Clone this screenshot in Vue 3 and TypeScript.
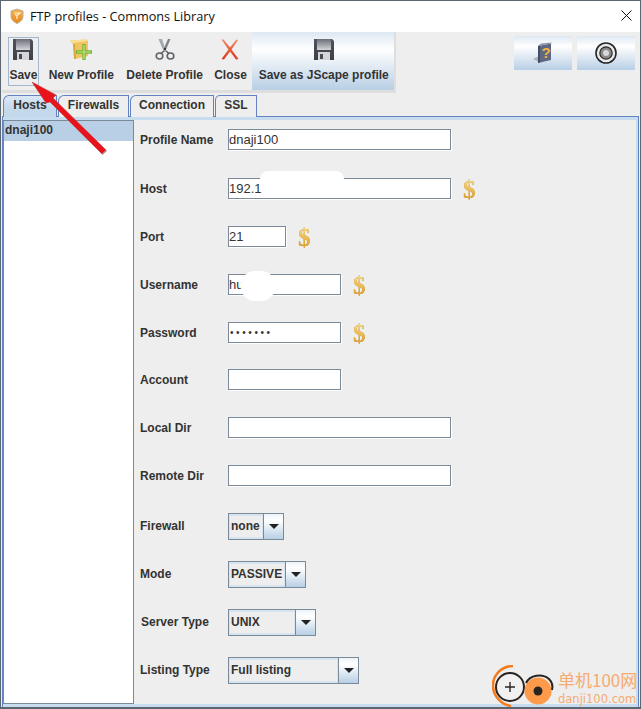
<script setup lang="ts">
interface Field { label: string; kind: 'input' | 'combo'; value?: string; width: number; dollar?: boolean; blot?: 'host' | 'user'; password?: boolean; shift?: boolean; size?: 'tall' | 'short' }
const fields: Field[] = [
  { label: 'Profile Name', kind: 'input', value: 'dnaji100', width: 223, size: 'tall' },
  { label: 'Host', kind: 'input', value: '192.1', width: 223, dollar: true, blot: 'host' },
  { label: 'Port', kind: 'input', value: '21', width: 58, dollar: true },
  { label: 'Username', kind: 'input', value: 'hu', width: 113, dollar: true, blot: 'user' },
  { label: 'Password', kind: 'input', value: '•••••••', width: 113, dollar: true, password: true, size: 'short' },
  { label: 'Account', kind: 'input', value: '', width: 113 },
  { label: 'Local Dir', kind: 'input', value: '', width: 223 },
  { label: 'Remote Dir', kind: 'input', value: '', width: 223 },
  { label: 'Firewall', kind: 'combo', value: 'none', width: 56 },
  { label: 'Mode', kind: 'combo', value: 'PASSIVE', width: 78 },
  { label: 'Server Type', kind: 'combo', value: 'UNIX', width: 88, shift: true },
  { label: 'Listing Type', kind: 'combo', value: 'Full listing', width: 131 },
]
const tabs = ['Hosts', 'Firewalls', 'Connection', 'SSL']
</script>

<template>
  <div class="window">
    <div class="titlebar">
      <svg class="appicon" width="16" height="16" viewBox="0 0 16 16">
        <defs>
          <linearGradient id="sh" x1="0" y1="0" x2="0" y2="1"><stop offset="0" stop-color="#f7b34c"/><stop offset="1" stop-color="#e8861c"/></linearGradient>
        </defs>
        <path d="M8 1 L14 3 V8 C14 12 11 14 8 15.5 C5 14 2 12 2 8 V3 Z" fill="url(#sh)" stroke="#b9b29c" stroke-width="1"/>
        <path d="M5 5 H11 L8 7.5 V11 M8 7.5 L6 6.5" fill="none" stroke="#fff3d6" stroke-width="1.2"/>
      </svg>
      <span class="title">FTP profiles - Commons Library</span>
      <svg class="closex" width="11" height="11" viewBox="0 0 11 11"><path d="M0.5 0.5 L10.5 10.5 M10.5 0.5 L0.5 10.5" stroke="#111" stroke-width="1" fill="none"/></svg>
    </div>

    <div class="body">
      <div class="toolrow">
        <div class="toolbar">
          <div class="tool save">
            <svg width="20" height="21" viewBox="0 0 20 21"><use href="#floppy"/></svg>
            <span>Save</span>
          </div>
          <div class="tool newp">
            <svg width="24" height="21" viewBox="0 0 24 21">
              <path d="M1 1.5 L18 0.5 L19 2 V17 L6 20 L4 5 Z" fill="#eec560"/>
              <path d="M1 1.5 L18 0.5 L19 2 L4 4 Z" fill="#f8e097"/>
              <path d="M4 5 L5 20 L7 20 L6 5 Z" fill="#d8a640"/>
              <path d="M15 5 V21 M7 13 H23" stroke="#79b536" stroke-width="3.4"/>
              <path d="M15 6 V20 M8 13 H22" stroke="#bfe685" stroke-width="1.2"/>
            </svg>
            <span>New Profile</span>
          </div>
          <div class="tool del">
            <svg width="20" height="21" viewBox="0 0 20 21">
              <path d="M3.5 0 L7 0 L11 12 L9 13 Z" fill="#a4a9ad"/>
              <path d="M15.5 0 L13 0 L8.5 10 L10 13 Z" fill="#7e8488"/>
              <circle cx="10" cy="10" r="1" fill="#222"/>
              <path d="M9 12 L6 14.5 M11 12 L14 14.5" stroke="#5a5f63" stroke-width="1.6"/>
              <ellipse cx="4.5" cy="17" rx="3.3" ry="3" fill="none" stroke="#5e6367" stroke-width="1.6"/>
              <ellipse cx="15.5" cy="17" rx="3.3" ry="3" fill="none" stroke="#5e6367" stroke-width="1.6"/>
            </svg>
            <span>Delete Profile</span>
          </div>
          <div class="tool clo">
            <svg width="18" height="21" viewBox="0 0 18 21">
              <defs><linearGradient id="xr" x1="0" y1="0" x2="0" y2="1"><stop offset="0" stop-color="#f2876a"/><stop offset="0.5" stop-color="#ea5a36"/><stop offset="1" stop-color="#d93a22"/></linearGradient></defs>
              <path d="M0.5 0.5 L2.5 0.5 L9 8.5 L15.5 0.5 L17 1 L10.5 10.5 L17.5 20 L15 20.5 L9 12.5 L3 20.5 L0.5 20 L7.5 10.5 Z" fill="url(#xr)"/>
            </svg>
            <span>Close</span>
          </div>
          <div class="tool jscape">
            <svg width="20" height="21" viewBox="0 0 20 21"><use href="#floppy"/></svg>
            <span>Save as JScape profile</span>
          </div>
        </div>
        <div class="sidebtns">
          <div class="sidebtn">
            <svg width="22" height="22" viewBox="0 0 22 22">
              <path d="M1 17 L7 14 V20 Z" fill="#aeb3bb"/>
              <path d="M6 4 L19 1.5 V18 L6 21 Z" fill="#5f6883"/>
              <path d="M6 4 L9 1.5 L20 0.5 L19 1.5 Z" fill="#8b93a8"/>
              <path d="M6 4 V21 L8 20.5 V3.5 Z" fill="#454c63"/>
              <text x="9.5" y="16" class="q">?</text>
            </svg>
          </div>
          <div class="sidebtn">
            <svg width="22" height="22" viewBox="0 0 22 22">
              <circle cx="11" cy="11" r="10" fill="#ececec" stroke="#262626" stroke-width="1.6"/>
              <circle cx="11" cy="11" r="6.2" fill="#8a8a8a" stroke="#2a2a2a" stroke-width="1.2"/>
              <circle cx="11" cy="11" r="3" fill="#d8d8d8"/>
            </svg>
          </div>
        </div>
      </div>

      <div class="tabs">
        <div v-for="(t, i) in tabs" :key="t" class="tab" :class="['t' + i, { on: i === 0 }]">{{ t }}</div>
      </div>

      <div class="pane">
        <div class="list"><div class="selrow">dnaji100</div></div>
        <div class="form">
          <div v-for="f in fields" :key="f.label" class="row" :class="[f.size, { comborow: f.kind === 'combo' }]">
            <label :class="{ shift: f.shift }">{{ f.label }}</label>
            <div v-if="f.kind === 'input'" class="input" :class="{ pw: f.password }" :style="{ width: f.width + 'px' }">
              {{ f.value }}
              <div v-if="f.blot" class="blot" :class="f.blot"></div>
            </div>
            <div v-else class="combo" :style="{ width: f.width + 'px' }">
              <div class="cval">{{ f.value }}</div>
              <div class="carrow"><i></i></div>
            </div>
            <span v-if="f.dollar" class="dollar">$</span>
          </div>
        </div>
      </div>
    </div>

    <svg class="defs" width="0" height="0">
      <defs>
        <linearGradient id="fl" x1="0" y1="0" x2="0" y2="1"><stop offset="0" stop-color="#50525b"/><stop offset="1" stop-color="#3e4048"/></linearGradient>
        <linearGradient id="fp" x1="0" y1="0" x2="0" y2="1"><stop offset="0" stop-color="#6b6d77"/><stop offset="1" stop-color="#d4d5d9"/></linearGradient>
        <g id="floppy">
          <path d="M0 0 H18 L20 2 V21 H0 Z" fill="url(#fl)"/>
          <rect x="3" y="0" width="14" height="11" fill="url(#fp)"/>
          <rect x="4" y="13" width="12" height="8" fill="#d6d6d8"/>
          <rect x="6" y="15" width="3" height="5" fill="#4a4c55"/>
        </g>
      </defs>
    </svg>

    <svg class="arrow" width="80" height="76" viewBox="0 0 80 76">
      <path d="M1 0 L25 13 L22 16 L75 68 L71 72 L19 20 L15 21 Z" fill="#e8141c" stroke="#c62a2a" stroke-width="0.5"/>
      <path d="M71 72.5 L75.5 68.5" stroke="#9c8a8a" stroke-width="1.2"/>
    </svg>

    <div class="wm">
      <svg width="64" height="44" viewBox="0 0 64 44">
        <path d="M21 1 C9 1 0 11 1 22 C2 32 10 40 19 41" fill="none" stroke="#f47c20" stroke-width="2.6"/>
        <circle cx="18" cy="22" r="14" fill="#f1f1f1" stroke="#2b2522" stroke-width="2"/>
        <path d="M18 17 V27 M13 22 H23" stroke="#2b2522" stroke-width="1.4"/>
        <circle cx="46" cy="26" r="13.5" fill="#ff9a4a"/>
        <path d="M34 18 C38 10 50 8 57 14 C60 17 61 21 60 25" fill="none" stroke="#2b2522" stroke-width="2"/>
        <circle cx="46" cy="26" r="4.5" fill="#2b2522"/>
      </svg>
      <div class="wmt">
        <div class="w1">单机100网</div>
        <div class="w2">danji100.com</div>
      </div>
    </div>
  </div>
</template>

<style>
html, body { margin: 0; background: #eee; }
</style>

<style scoped>
.window {
  position: relative;
  width: 641px;
  height: 709px;
  box-sizing: border-box;
  border: 1px solid #5b6670;
  border-top-width: 1px;
  border-bottom-width: 2px;
  background: #eeeeee;
  overflow: hidden;
  display: flex;
  flex-direction: column;
  font-family: "Liberation Sans", Arial, sans-serif;
  color: #333333;
}
.defs { position: absolute; }
.titlebar {
  height: 31px;
  flex: none;
  background: #fff;
  display: flex;
  align-items: center;
  padding-left: 8px;
  padding-right: 8px;
  box-sizing: border-box;
}
.appicon { margin-right: 5px; margin-top: -1px; }
.title {
  font-family: "Open Sans", "Noto Sans", sans-serif;
  font-size: 12.7px;
  color: #111;
  flex: 1;
  margin-top: -1px;
}
.closex { margin-top: -2px; }
.body { flex: 1; display: flex; flex-direction: column; padding: 0 0 0 1px; min-height: 0; }
.toolrow { display: flex; justify-content: space-between; height: 63px; flex: none; }
.toolbar {
  display: flex;
  align-items: stretch;
  width: 392px;
  height: 58px;
  border-right: 2px solid #dedede;
  border-bottom: 3px solid #dedede;
}
.tool {
  display: flex;
  flex-direction: column;
  align-items: center;
  font-size: 12px;
  font-weight: 700;
  white-space: nowrap;
  padding-top: 7px;
  box-sizing: border-box;
}
.tool svg { flex: none; }
.tool span { margin-top: 8px; line-height: 14px; }
.save {
  width: 31px;
  height: 49px;
  margin: 5px 0 0 6px;
  padding-top: 1px;
  border: 1px solid #a3b8cc;
}
.newp { margin-left: 9px; width: 67px; }
.del { margin-left: 11px; width: 78px; }
.clo { margin-left: 10px; width: 34px; }
.jscape {
  margin-left: 5px;
  width: 142px;
  height: 58px;
  padding-left: 1px;
  background: linear-gradient(#dde8f3 0%, #ffffff 30%, #b8cfe5 100%);
}
.sidebtns { display: flex; gap: 5px; padding-top: 4px; padding-right: 5px; }
.sidebtn {
  width: 58px;
  height: 34px;
  background: linear-gradient(#dde8f3 0%, #ffffff 30%, #b8cfe5 100%);
  display: flex;
  align-items: center;
  justify-content: center;
}
.q { font: 700 15px "Liberation Sans", sans-serif; fill: #f0b33c; }
.tabs { display: flex; height: 21px; flex: none; padding-left: 1px; }
.tab {
  box-sizing: border-box;
  height: 22px;
  border: 1px solid #6382bf;
  border-bottom: 0;
  border-top-left-radius: 6px;
  margin-right: 1px;
  font-size: 12px;
  font-weight: 700;
  text-align: center;
  line-height: 18px;
  background: #eeeeee;
  position: relative;
}
.t0 { width: 54px; }
.t1 { width: 71px; }
.t2 { width: 84px; }
.t3 { width: 42px; border-top-left-radius: 5px; }
.tab.on {
  z-index: 1;
  background: linear-gradient(#dbe8f4, #c4d8ec 60%);
}
.pane {
  flex: 1;
  min-height: 0;
  display: flex;
  margin-right: 1px;
  border: 1px solid #6382bf;
  border-bottom: 0;
  background: #c8dcef;
  padding: 3px 2px 3px 0;
  box-sizing: border-box;
}
.list {
  width: 131px;
  flex: none;
  background: #fff;
  border: 1px solid #7a8a99;
  box-sizing: border-box;
  font-size: 12px;
  font-weight: 700;
}
.selrow {
  height: 20px;
  line-height: 18px;
  padding-left: 1px;
  background: #b8cfe5;
}
.form { flex: 1; padding: 9px 0 0 6px; background: #eee; }
.row {
  height: 48px;
  display: flex;
  align-items: flex-start;
  position: relative;
}
.tall { height: 49px; }
.short { height: 47px; }
label {
  width: 88px;
  flex: none;
  font-size: 12px;
  font-weight: 700;
  line-height: 23px;
}
.comborow label { line-height: 27px; }
label.shift { padding-left: 1px; width: 87px; }
.input {
  position: relative;
  box-sizing: border-box;
  height: 21px;
  border: 1px solid #7a8a99;
  background: #fff;
  box-shadow: 1px 1px 0 #fff;
  font-size: 13px;
  line-height: 19px;
  color: #333;
  white-space: pre;
}
.pw { font-size: 10px; padding-left: 1px; letter-spacing: 2.6px; }
.blot { position: absolute; background: #fff; }
.blot.host { left: 31px; top: -8px; width: 84px; height: 22px; border-radius: 8px; }
.blot.user { left: 12px; top: -4px; width: 34px; height: 30px; border-radius: 14px; }
.dollar {
  margin-left: 12px;
  font-family: "Liberation Serif", serif;
  font-weight: 700;
  font-size: 25px;
  line-height: 23px;
  background: linear-gradient(#fbe08a, #dc9a22);
  -webkit-background-clip: text;
  background-clip: text;
  color: transparent;
  filter: drop-shadow(0 0 0.6px #b98224);
}
.combo {
  box-sizing: border-box;
  height: 27px;
  border: 1px solid #7a8a99;
  display: flex;
  font-size: 12px;
  font-weight: 700;
  background: #eee;
}
.cval {
  flex: 1;
  box-sizing: border-box;
  border: 1px solid #d7e3ef;
  border-width: 2px 1px;
  padding-left: 1px;
  line-height: 20px;
  white-space: nowrap;
}
.carrow {
  width: 19px;
  border-left: 1px solid #7a8a99;
  background: linear-gradient(#eef3f9, #ffffff 25%, #b8cfe5);
  display: flex;
  align-items: center;
  justify-content: center;
}
.carrow i {
  width: 0;
  height: 0;
  border-left: 5px solid transparent;
  border-right: 5px solid transparent;
  border-top: 5px solid #222;
}
.arrow { position: absolute; left: 30px; top: 81px; z-index: 5; }
.wm {
  position: absolute;
  left: 491px;
  top: 664px;
  display: flex;
  color: #f6ab70;
  z-index: 5;
}
.wm svg { flex: none; }
.wmt { margin-left: 2px; padding-top: 5px; white-space: nowrap; }
.w1 { font-family: "Noto Sans CJK SC", sans-serif; font-size: 17px; line-height: 22px; margin-top: -1px; }
.w2 { font-family: "DejaVu Sans", sans-serif; font-size: 11.5px; line-height: 16px; }
</style>
